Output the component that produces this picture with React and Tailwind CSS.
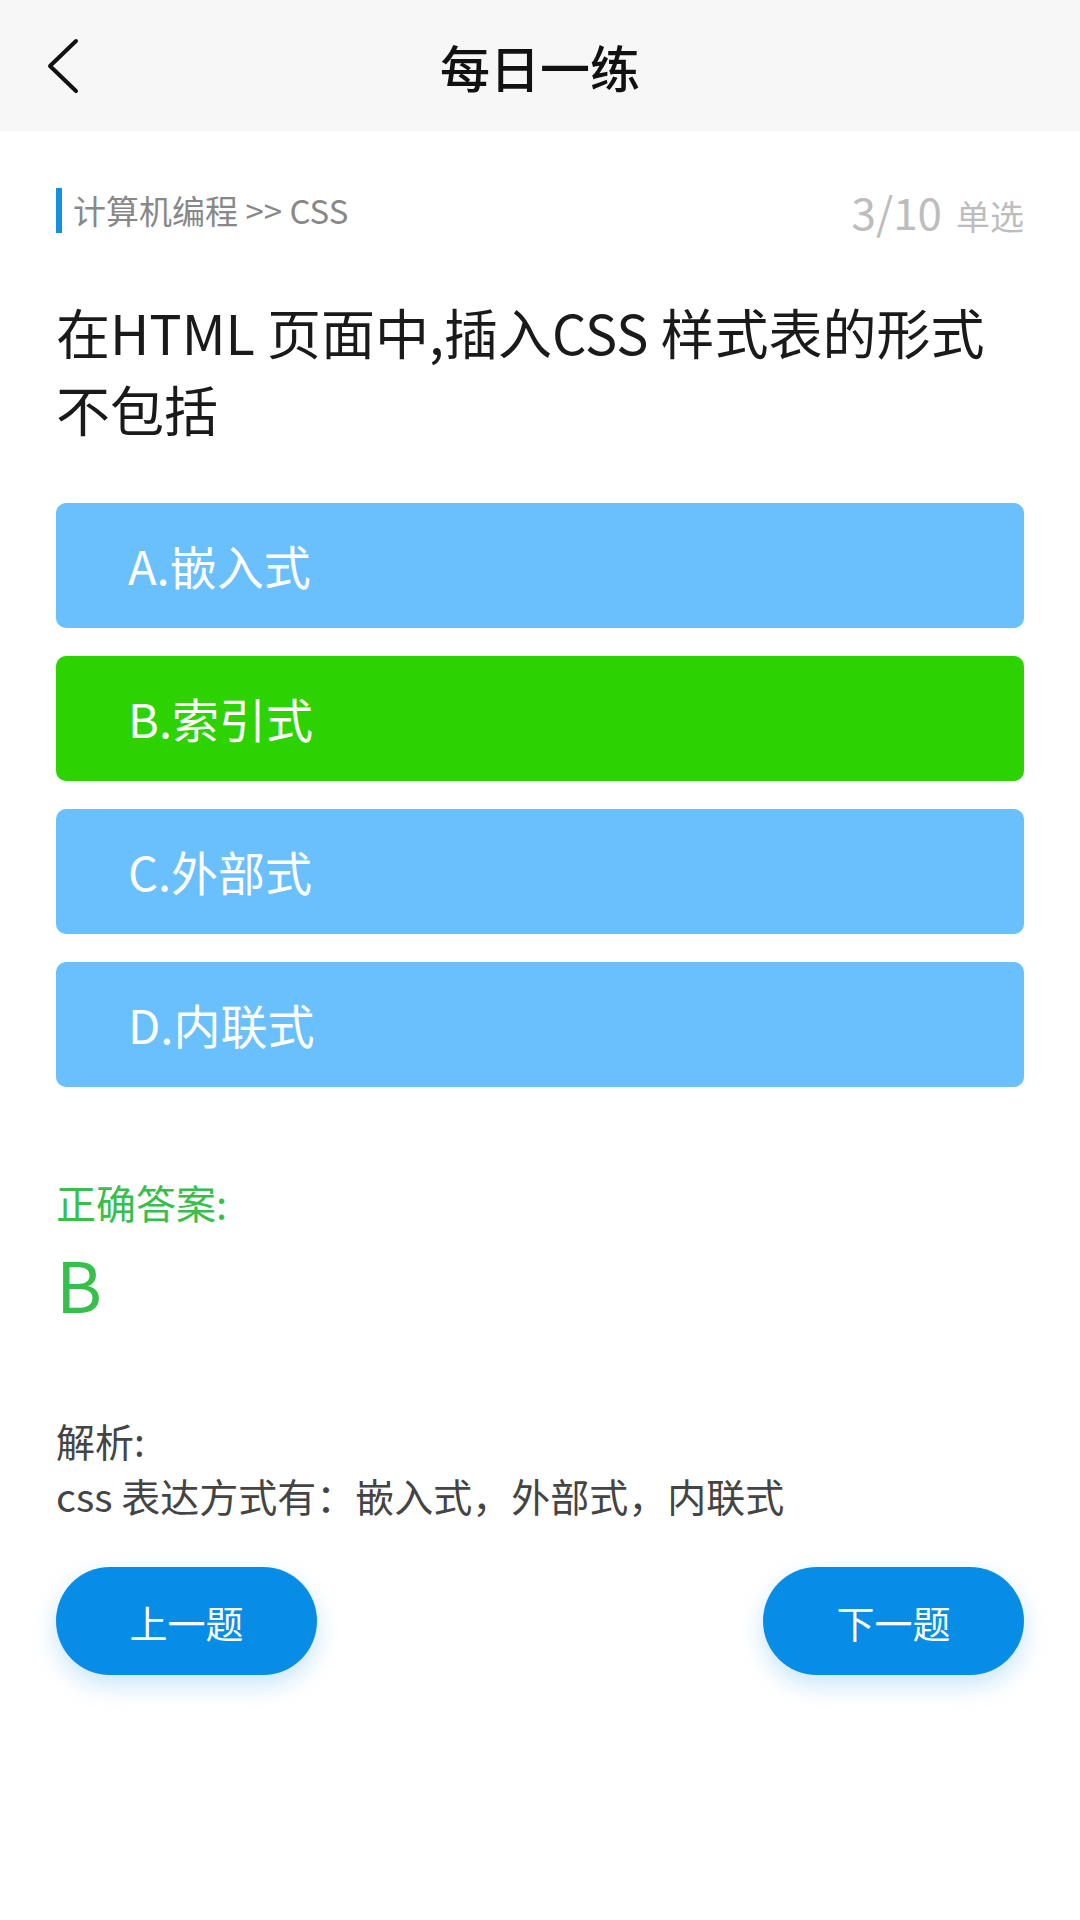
import React from "react";

const options = [
  { key: "A", text: "嵌入式", correct: false },
  { key: "B", text: "索引式", correct: true },
  { key: "C", text: "外部式", correct: false },
  { key: "D", text: "内联式", correct: false },
];

const font = { fontFamily: '"Noto Sans CJK SC", "Noto Sans", sans-serif' };

export default function App() {
  return (
    <div className="min-h-[1920px] w-[1080px] bg-white" style={font}>
      {/* Header */}
      <div className="relative flex h-[131px] items-center justify-center bg-[#f7f7f7]">
        <button className="absolute left-[40px] top-[34px] flex h-[64px] w-[48px] items-center justify-center">
          <svg width="40" height="56" viewBox="0 0 40 56" fill="none">
            <polyline
              points="32,3 6,28 32,53"
              stroke="#111"
              strokeWidth="4"
              strokeLinecap="round"
              strokeLinejoin="round"
            />
          </svg>
        </button>
        <h1 className="text-[50px] font-medium leading-none text-[#111]">每日一练</h1>
      </div>

      <div className="px-[56px]">
        {/* Breadcrumb + progress */}
        <div className="mt-[57px] flex h-[45px] items-center justify-between">
          <div className="flex h-full items-center">
            <div className="h-full w-[6px] bg-[#1191e0]" />
            <span className="ml-[11px] text-[33px] leading-none text-[#888]">计算机编程 &gt;&gt; CSS</span>
          </div>
          <div className="flex items-baseline gap-[14px] text-[#bdbdbd]">
            <span className="text-[44px] leading-none">3/10</span>
            <span className="text-[34px] leading-none">单选</span>
          </div>
        </div>

        {/* Question */}
        <p className="mt-[60px] text-[54px] leading-[77px] text-[#1a1a1a]">
          在HTML 页面中,插入CSS 样式表的形式不包括
        </p>

        {/* Options */}
        <div className="mt-[56px] flex flex-col gap-[28px]">
          {options.map((opt) => (
            <div
              key={opt.key}
              className={
                opt.correct
                  ? "flex h-[125px] items-center rounded-[10px] bg-[#2dd300] pl-[72px] text-[47px] text-white"
                  : "flex h-[125px] items-center rounded-[10px] bg-[#69c0fc] pl-[72px] text-[47px] text-white"
              }
            >
              {opt.key}.{opt.text}
            </div>
          ))}
        </div>

        {/* Answer */}
        <div className="mt-[90px] text-[40px] leading-[50px] text-[#37bf4b]">正确答案:</div>
        <div className="mt-[16px] text-[70px] leading-[80px] text-[#37bf4b]">B</div>

        {/* Analysis */}
        <div className="mt-[90px] text-[39px] leading-[55px] text-[#444]">
          <div>解析:</div>
          <div>css 表达方式有：嵌入式，外部式，内联式</div>
        </div>

        {/* Navigation */}
        <div className="mt-[44px] flex justify-between">
          <button className="h-[108px] w-[261px] rounded-full bg-[#088de6] text-[38px] text-white shadow-[0_10px_24px_rgba(8,141,230,0.22)]">
            上一题
          </button>
          <button className="h-[108px] w-[261px] rounded-full bg-[#088de6] text-[38px] text-white shadow-[0_10px_24px_rgba(8,141,230,0.22)]">
            下一题
          </button>
        </div>
      </div>
    </div>
  );
}
